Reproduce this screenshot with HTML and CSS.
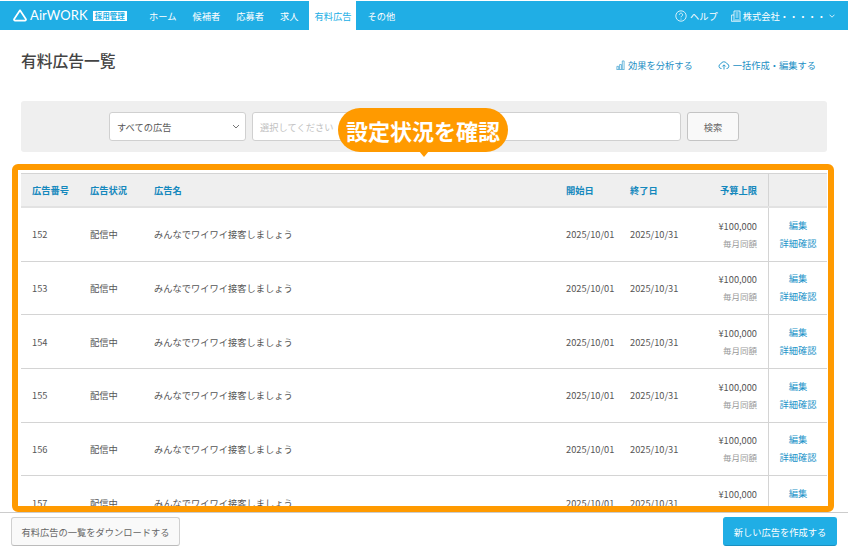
FILE: index.html
```html
<!DOCTYPE html>
<html lang="ja">
<head>
<meta charset="utf-8">
<title>有料広告一覧</title>
<link rel="stylesheet" href="styles.css">
</head>
<body>
<div class="app">
  <header class="topbar">
    <div class="brand">
      <svg class="brand-mark" viewBox="0 0 14 13" width="14" height="13"><path d="M7 1.3 12.8 10a1.1 1.1 0 0 1-.9 1.7H2.1A1.1 1.1 0 0 1 1.2 10Z" fill="none" stroke="#fff" stroke-width="1.7" stroke-linejoin="round"/></svg>
      <span class="brand-name">AirWORK</span>
      <span class="brand-tag">採用管理</span>
    </div>
    <nav class="nav">
      <a class="nav-item">ホーム</a>
      <a class="nav-item">候補者</a>
      <a class="nav-item">応募者</a>
      <a class="nav-item">求人</a>
      <a class="nav-item active">有料広告</a>
      <a class="nav-item">その他</a>
    </nav>
    <div class="top-right">
      <span class="top-link">
        <svg viewBox="0 0 12 12" width="12" height="12"><circle cx="6" cy="6" r="5.2" fill="none" stroke="#fff" stroke-width=".8"/><path d="M4.4 4.7a1.6 1.6 0 1 1 2.4 1.4c-.6.3-.8.6-.8 1.2" fill="none" stroke="#fff" stroke-width=".8"/><circle cx="6" cy="8.9" r=".5" fill="#fff"/></svg>
        ヘルプ
      </span>
      <span class="top-link company">
        <svg viewBox="0 0 10 12" width="10" height="12"><path d="M3 11V1h6v10M.6 11V5H3M.2 11.3h9.6M4.6 3h2.8M4.6 5h2.8M4.6 7h2.8M5 9v2M7 9v2" fill="none" stroke="#fff" stroke-width=".8"/></svg>
        <span>株式会社・・・・・</span>
        <svg class="top-chev" viewBox="0 0 6 4" width="6" height="4"><path d="M.5.7 3 3.2 5.5.7" fill="none" stroke="#fff" stroke-width=".8"/></svg>
      </span>
    </div>
  </header>

  <main class="content">
    <div class="page-head">
      <h1 class="page-title">有料広告一覧</h1>
      <div class="page-actions">
        <a class="page-action">
          <svg viewBox="0 0 10 11" width="9" height="10"><path d="M.5 10.5h9M1 10V7h2v3M4 10V5h2v5M7 10V1h2v9" fill="none" stroke="#3a9fd0" stroke-width=".8"/></svg>
          効果を分析する
        </a>
        <a class="page-action">
          <svg viewBox="0 0 12 10" width="12" height="10"><path d="M3.5 8.5H3A2.3 2.3 0 0 1 2.7 4 3.4 3.4 0 0 1 9 3.8a2.4 2.4 0 0 1 0 4.7h-.5M6 9.5V5M4.3 6.5 6 4.8l1.7 1.7" fill="none" stroke="#1b93c9" stroke-width=".9"/></svg>
          一括作成・編集する
        </a>
      </div>
    </div>

    <form class="search">
      <div class="select">
        <span>すべての広告</span>
        <svg viewBox="0 0 8 5" width="8" height="5"><path d="M1 1 4 4l3-3" fill="none" stroke="#666" stroke-width=".9"/></svg>
      </div>
      <div class="input">選択してください</div>
      <div class="search-btn">検索</div>
    </form>

    <div class="ad-table">
      <div class="ad-row ad-head">
        <div class="cell">広告番号</div>
        <div class="cell">広告状況</div>
        <div class="cell">広告名</div>
        <div class="cell">開始日</div>
        <div class="cell">終了日</div>
        <div class="cell num">予算上限</div>
        <div class="cell ops"></div>
      </div>
      <div class="ad-row">
        <div class="cell">152</div><div class="cell">配信中</div><div class="cell">みんなでワイワイ接客しましょう</div><div class="cell">2025/10/01</div><div class="cell">2025/10/31</div>
        <div class="cell num"><span>¥100,000</span><small>毎月同額</small></div>
        <div class="cell ops"><a>編集</a><a>詳細確認</a></div>
      </div>
      <div class="ad-row">
        <div class="cell">153</div><div class="cell">配信中</div><div class="cell">みんなでワイワイ接客しましょう</div><div class="cell">2025/10/01</div><div class="cell">2025/10/31</div>
        <div class="cell num"><span>¥100,000</span><small>毎月同額</small></div>
        <div class="cell ops"><a>編集</a><a>詳細確認</a></div>
      </div>
      <div class="ad-row">
        <div class="cell">154</div><div class="cell">配信中</div><div class="cell">みんなでワイワイ接客しましょう</div><div class="cell">2025/10/01</div><div class="cell">2025/10/31</div>
        <div class="cell num"><span>¥100,000</span><small>毎月同額</small></div>
        <div class="cell ops"><a>編集</a><a>詳細確認</a></div>
      </div>
      <div class="ad-row">
        <div class="cell">155</div><div class="cell">配信中</div><div class="cell">みんなでワイワイ接客しましょう</div><div class="cell">2025/10/01</div><div class="cell">2025/10/31</div>
        <div class="cell num"><span>¥100,000</span><small>毎月同額</small></div>
        <div class="cell ops"><a>編集</a><a>詳細確認</a></div>
      </div>
      <div class="ad-row">
        <div class="cell">156</div><div class="cell">配信中</div><div class="cell">みんなでワイワイ接客しましょう</div><div class="cell">2025/10/01</div><div class="cell">2025/10/31</div>
        <div class="cell num"><span>¥100,000</span><small>毎月同額</small></div>
        <div class="cell ops"><a>編集</a><a>詳細確認</a></div>
      </div>
      <div class="ad-row">
        <div class="cell">157</div><div class="cell">配信中</div><div class="cell">みんなでワイワイ接客しましょう</div><div class="cell">2025/10/01</div><div class="cell">2025/10/31</div>
        <div class="cell num"><span>¥100,000</span><small>毎月同額</small></div>
        <div class="cell ops"><a>編集</a><a>詳細確認</a></div>
      </div>
    </div>
  </main>

  <footer class="footer">
    <div class="btn">有料広告の一覧をダウンロードする</div>
    <div class="btn primary">新しい広告を作成する</div>
  </footer>

  <div class="highlight"></div>
  <div class="callout">設定状況を確認</div>
</div>
</body>
</html>
```
FILE: styles.css
```css
* { box-sizing: border-box; }
html, body { margin: 0; padding: 0; height: 100%; overflow: hidden; }
body {
  font-family: "Noto Sans CJK JP", "Noto Sans", sans-serif;
  font-size: 9.25px;
  color: #555;
  background: #fff;
}
.app { position: relative; display: flex; flex-direction: column; height: 553px; overflow: hidden; }

.topbar {
  flex: none;
  display: flex;
  align-items: stretch;
  height: 29px;
  margin-top: 1px;
  background: #20aee5;
  color: #fff;
}
.brand { display: flex; align-items: center; width: 141px; padding-left: 13px; }
.brand-mark { flex: none; margin-top: -1px; }
.brand-name {
  margin-left: 3px;
  font-family: "Lato", sans-serif;
  font-size: 13px;
  line-height: 1;
  letter-spacing: .1px;
  color: #fff;
}
.brand-tag {
  margin-left: 5px;
  padding: 0 2px;
  height: 10px;
  line-height: 10px;
  font-size: 7.5px;
  font-weight: 700;
  background: #fff;
  color: #20aee5;
  white-space: nowrap;
}
.nav { display: flex; }
.nav-item {
  display: flex;
  align-items: center;
  padding: 0 5px;
  margin: 0 3px;
  color: #fff;
  white-space: nowrap;
}
.nav-item.active { background: #fff; color: #20aee5; }
.top-right { margin-left: auto; display: flex; align-items: center; gap: 13px; padding-right: 13px; }
.top-link { display: flex; align-items: center; gap: 3px; white-space: nowrap; }
.company { gap: 2px; }
.top-chev { margin-left: 1px; }

.content { flex: 1; min-height: 0; overflow: hidden; padding: 0 21px; }
.page-head { display: flex; align-items: center; justify-content: space-between; height: 60px; margin-bottom: 11px; }
.page-title { margin: 0; font-size: 15.75px; font-weight: 500; color: #444; }
.page-actions { display: flex; gap: 25px; margin-top: 9px; padding-right: 11px; }
.page-action { display: flex; align-items: center; gap: 3px; color: #1b8ec4; white-space: nowrap; }

.search {
  display: flex;
  justify-content: center;
  gap: 6px;
  height: 51px;
  padding-top: 11px;
  background: #efefef;
  border-radius: 3px;
}
.select, .input, .search-btn {
  height: 29px;
  border: 1px solid #d0d0d0;
  border-radius: 3px;
  background: #fff;
  display: flex;
  align-items: center;
}
.select { width: 137px; padding: 0 5px 0 7px; justify-content: space-between; }
.input { width: 429px; padding-left: 7px; color: #c2c2c2; }
.search-btn { width: 52px; justify-content: center; background: #f9f9f9; border-color: #c4c4c4; color: #666; }

.ad-table { margin-top: 21px; border-top: 1px solid #d4d4d4; }
.ad-row {
  display: grid;
  grid-template-columns: 69px 64px 412px 64px 64px 74px 59px;
  height: 53.67px;
  border-bottom: 1px solid #d4d4d4;
}
.ad-head {
  height: 34px;
  background: #efefef;
  border-bottom: 2px solid #e2e2e2;
  color: #1488bd;
  font-weight: 700;
}
.cell { display: flex; align-items: center; white-space: nowrap; }
.ad-row .cell:first-child { padding-left: 11px; }
.num { flex-direction: column; align-items: flex-end; justify-content: center; padding-right: 11px; }
.num small { margin-top: 4px; font-size: 8.5px; color: #999; line-height: 12px; }
.num span { line-height: 13px; }
.ops { flex-direction: column; justify-content: center; gap: 5px; border-left: 1px solid #d4d4d4; color: #1b93c9; }
.ops a { line-height: 13px; }

.footer {
  flex: none;
  display: flex;
  justify-content: space-between;
  height: 41px;
  padding: 4px 11px 0 11px;
  background: #fff;
  border-top: 1px solid #ccc;
}
.btn {
  display: flex;
  align-items: center;
  justify-content: center;
  width: 169px;
  height: 29px;
  border: 1px solid #d0d0d0;
  border-bottom-color: #bbb;
  border-radius: 3px;
  background: #f9f9f9;
  color: #666;
}
.btn.primary { width: 114px; background: #20aee5; border-color: #20aee5; border-bottom-color: #1a8fc0; color: #fff; }

.highlight {
  position: absolute;
  left: 12px;
  top: 164px;
  width: 822px;
  height: 348px;
  border: 6px solid #ff9a00;
  border-radius: 6px;
  pointer-events: none;
}
.callout {
  position: absolute;
  left: 338px;
  top: 108px;
  width: 170px;
  height: 44px;
  border-radius: 22px;
  background: #ff9a00;
  color: #fff;
  font-size: 22px;
  font-weight: 700;
  line-height: 44px;
  text-align: center;
  white-space: nowrap;
}
.callout::after {
  content: "";
  position: absolute;
  left: 81px;
  top: 43px;
  border-style: solid;
  border-width: 6px 5px 0 5px;
  border-color: #ff9a00 transparent transparent transparent;
}
```
